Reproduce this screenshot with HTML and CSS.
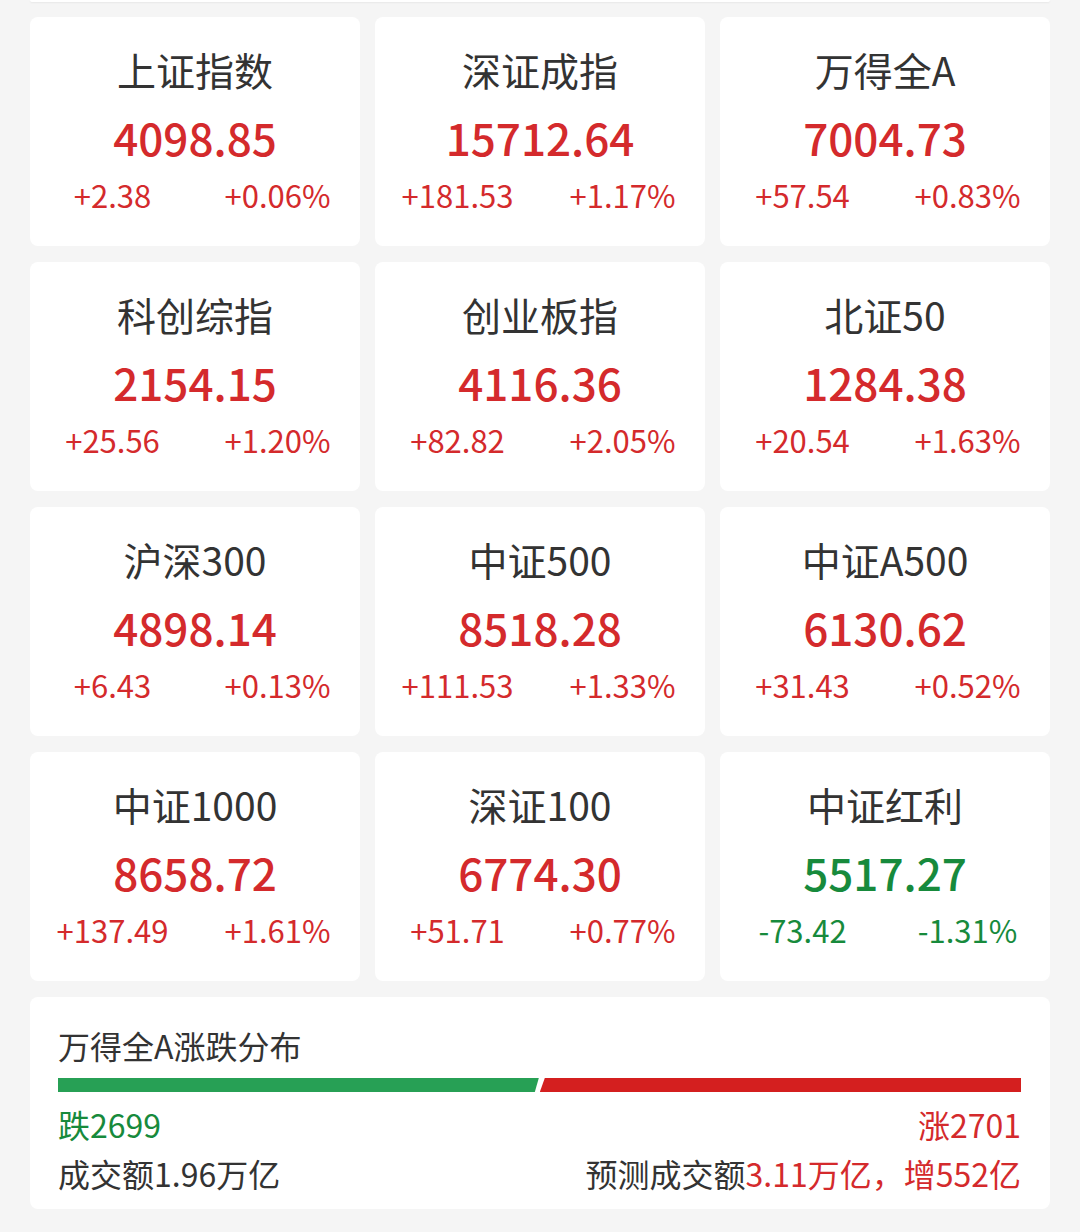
FILE: index.html
```html
<!DOCTYPE html>
<html lang="zh-CN">
<head>
  <meta charset="UTF-8" />
  <meta name="viewport" content="width=device-width, initial-scale=1.0" />
  <title>指数行情</title>
  <link rel="stylesheet" href="styles.css">
</head>
<body>
  <div class="page">
    <div class="stub"></div>

    <div class="grid">
      <div class="card up">
        <div class="name">上证指数</div>
        <div class="price">4098.85</div>
        <div class="change"><span>+2.38</span><span>+0.06%</span></div>
      </div>
      <div class="card up">
        <div class="name">深证成指</div>
        <div class="price">15712.64</div>
        <div class="change"><span>+181.53</span><span>+1.17%</span></div>
      </div>
      <div class="card up">
        <div class="name">万得全A</div>
        <div class="price">7004.73</div>
        <div class="change"><span>+57.54</span><span>+0.83%</span></div>
      </div>

      <div class="card up">
        <div class="name">科创综指</div>
        <div class="price">2154.15</div>
        <div class="change"><span>+25.56</span><span>+1.20%</span></div>
      </div>
      <div class="card up">
        <div class="name">创业板指</div>
        <div class="price">4116.36</div>
        <div class="change"><span>+82.82</span><span>+2.05%</span></div>
      </div>
      <div class="card up">
        <div class="name">北证50</div>
        <div class="price">1284.38</div>
        <div class="change"><span>+20.54</span><span>+1.63%</span></div>
      </div>

      <div class="card up">
        <div class="name">沪深300</div>
        <div class="price">4898.14</div>
        <div class="change"><span>+6.43</span><span>+0.13%</span></div>
      </div>
      <div class="card up">
        <div class="name">中证500</div>
        <div class="price">8518.28</div>
        <div class="change"><span>+111.53</span><span>+1.33%</span></div>
      </div>
      <div class="card up">
        <div class="name">中证A500</div>
        <div class="price">6130.62</div>
        <div class="change"><span>+31.43</span><span>+0.52%</span></div>
      </div>

      <div class="card up">
        <div class="name">中证1000</div>
        <div class="price">8658.72</div>
        <div class="change"><span>+137.49</span><span>+1.61%</span></div>
      </div>
      <div class="card up">
        <div class="name">深证100</div>
        <div class="price">6774.30</div>
        <div class="change"><span>+51.71</span><span>+0.77%</span></div>
      </div>
      <div class="card down">
        <div class="name">中证红利</div>
        <div class="price">5517.27</div>
        <div class="change"><span>-73.42</span><span>-1.31%</span></div>
      </div>
    </div>

    <div class="breadth">
      <div class="breadth-title">万得全A涨跌分布</div>
      <div class="bar">
        <div class="bar-fall" style="width: 49.98%"></div>
        <div class="bar-rise" style="width: 50.02%"></div>
      </div>
      <div class="breadth-row counts">
        <span class="fall">跌2699</span>
        <span class="rise">涨2701</span>
      </div>
      <div class="breadth-row">
        <span>成交额1.96万亿</span>
        <span>预测成交额<em class="rise">3.11万亿，增552亿</em></span>
      </div>
    </div>
  </div>
</body>
</html>
```

FILE: styles.css
```css
body {
  margin: 0;
  background: #f5f5f5;
  color: #333;
  font-family: "Noto Sans CJK SC", "Noto Sans", sans-serif;
}

.page {
  width: 1020px;
  padding: 0 30px 20px;
}

.stub {
  height: 2px;
  background: #fff;
  border-radius: 0 0 8px 8px;
  box-shadow: 0 1px 2px rgba(0,0,0,0.06);
}

.grid {
  display: grid;
  grid-template-columns: repeat(3, 1fr);
  gap: 16px 15px;
  margin-top: 15px;
}

.card {
  background: #fff;
  border-radius: 8px;
  height: 229px;
  box-sizing: border-box;
  padding-top: 24px;
  text-align: center;
}

.name {
  font-size: 39px;
  line-height: 56px;
  color: #333;
}

.price {
  font-size: 44px;
  font-weight: 500;
  line-height: 56px;
  margin-top: 12px;
}

.change {
  display: grid;
  grid-template-columns: 1fr 1fr;
  font-size: 31px;
  line-height: 40px;
  margin-top: 10px;
}

.up .price,
.up .change {
  color: #d42a2c;
}

.down .price,
.down .change {
  color: #178a3c;
}

.breadth {
  background: #fff;
  border-radius: 8px;
  margin-top: 16px;
  height: 212px;
  box-sizing: border-box;
  padding: 26px 29px 0 28px;
}

.breadth-title {
  font-size: 32px;
  line-height: 44px;
}

.bar {
  display: flex;
  height: 14px;
  margin-top: 11px;
}

.bar-fall {
  background: #27a055;
  clip-path: polygon(0 0, 100% 0, calc(100% - 4px) 100%, 0 100%);
}

.bar-rise {
  background: #d41f1f;
  margin-left: 1px;
  clip-path: polygon(5px 0, 100% 0, 100% 100%, 0 100%);
}

.breadth-row {
  display: flex;
  justify-content: space-between;
  font-size: 32px;
  line-height: 49px;
}

.counts {
  margin-top: 8px;
}

.breadth-row em {
  font-style: normal;
}

.fall {
  color: #178a3c;
}

.rise {
  color: #d42a2c;
}
```
